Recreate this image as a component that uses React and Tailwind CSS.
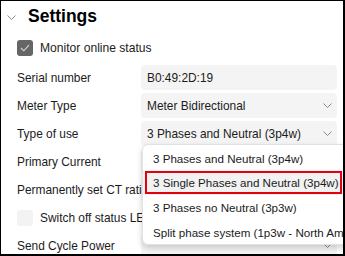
import React from "react";

const Chev = ({ className = "" }) => (
  <svg width="9" height="5" viewBox="0 0 9 5" className={className} fill="none">
    <path d="M0.5 0.5 L4.5 4.5 L8.5 0.5" stroke="#8a8a8a" strokeWidth="1" />
  </svg>
);

const Field = ({ children, chevron }) => (
  <div className="h-[25px] rounded-[4px] bg-[#f4f4f4] flex items-center pl-[6px] pr-[5px] justify-between">
    <span className="whitespace-nowrap relative top-[1px]">{children}</span>
    {chevron && <Chev />}
  </div>
);

const Row = ({ label, children }) => (
  <div className="grid grid-cols-[124px_196px] items-center h-[25px]">
    <span className="whitespace-nowrap relative top-[1px]">{label}</span>
    {children}
  </div>
);

const Item = ({ children, active }) => (
  <div className={`h-[25px] flex items-center pl-[10px] whitespace-nowrap text-[11.6px] ${active ? "bg-[#f2f2f2]" : ""}`}>
    <span className="relative top-[1px]">{children}</span>
  </div>
);

export default function App() {
  return (
    <div
      className="relative w-[345px] h-[256px] overflow-hidden bg-white border-black border-l border-t border-r-2 border-b-2 text-[11.9px] text-[#1b1b1b]"
      style={{ fontFamily: '"Liberation Sans", Arial, sans-serif' }}
    >
      <div className="flex items-center h-[31px] pl-[6px]">
        <Chev className="mr-[12px] mt-[1px]" />
        <span className="text-[17.5px] font-bold text-black leading-none">Settings</span>
      </div>
      <div className="flex items-center h-[16px] mt-[8px] pl-[16px]">
        <div className="w-[16px] h-[16px] rounded-[3px] bg-[#666666] flex items-center justify-center">
          <svg width="10" height="8" viewBox="0 0 10 8" fill="none">
            <path d="M1 4 L3.8 6.8 L9 1.2" stroke="#d8d8d8" strokeWidth="1.1" />
          </svg>
        </div>
        <span className="ml-[7px] text-[12.1px]">Monitor online status</span>
      </div>
      <div className="flex flex-col gap-[3px] mt-[9px] pl-[16px]">
        <Row label="Serial number">
          <Field>B0:49:2D:19</Field>
        </Row>
        <Row label="Meter Type">
          <Field chevron>Meter Bidirectional</Field>
        </Row>
        <Row label="Type of use">
          <Field chevron>3 Phases and Neutral (3p4w)</Field>
        </Row>
        <Row label="Primary Current">
          <Field></Field>
        </Row>
        <Row label="Permanently set CT ratio">
          <Field chevron></Field>
        </Row>
        <div className="flex items-center h-[25px]">
          <div className="w-[16px] h-[16px] rounded-[3px] bg-[#f3f3f3]" />
          <span className="ml-[7px] relative top-[1px]">Switch off status LED</span>
        </div>
        <Row label="Send Cycle Power">
          <Field chevron></Field>
        </Row>
      </div>

      <div className="absolute left-[141px] top-[143px] w-[230px] h-[101px] bg-white border border-[#e2e2e2] rounded-[6px] shadow-[0_3px_6px_rgba(0,0,0,0.18)] flex flex-col">
        <Item>3 Phases and Neutral (3p4w)</Item>
        <Item active>3 Single Phases and Neutral (3p4w)</Item>
        <Item>3 Phases no Neutral (3p3w)</Item>
        <Item>Split phase system (1p3w - North America)</Item>
      </div>
      <div className="absolute left-[144px] top-[170px] w-[197px] h-[23px] border-2 border-[#e3000f]" />
    </div>
  );
}
